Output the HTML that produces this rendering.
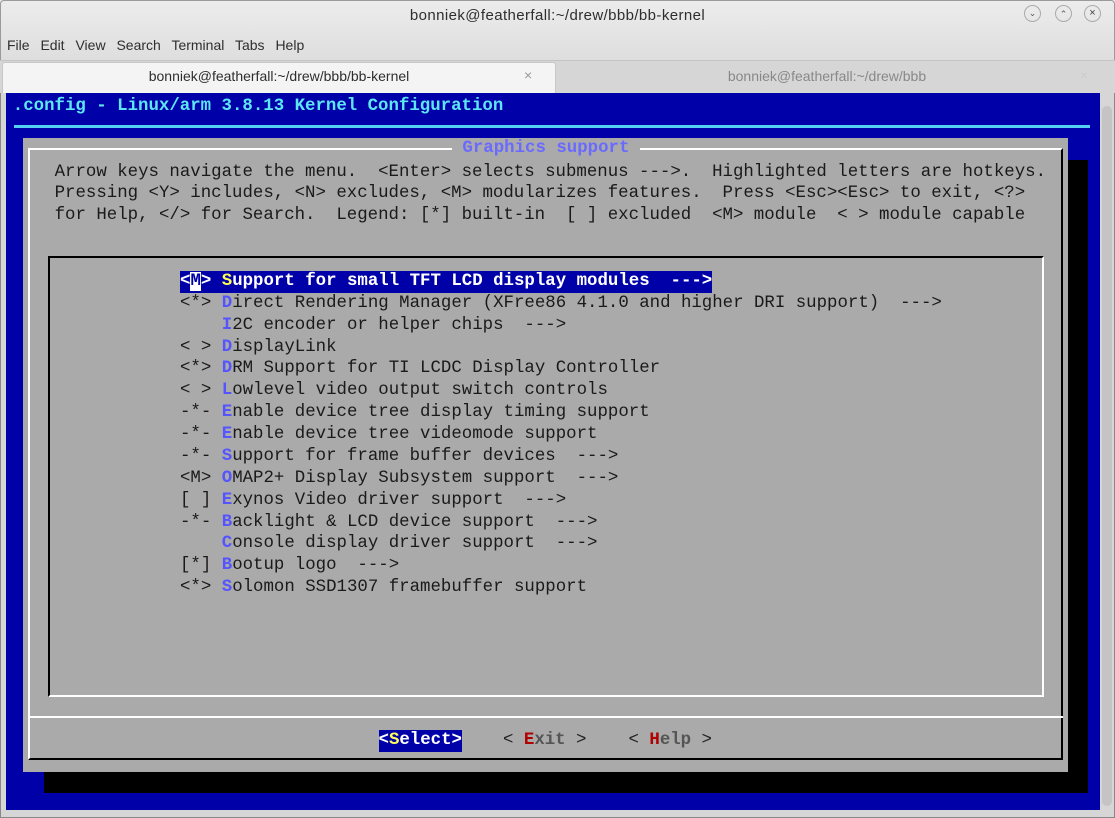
<!DOCTYPE html>
<html><head><style>
*{margin:0;padding:0;box-sizing:border-box}
body{width:1115px;height:818px;overflow:hidden;background:#e8e8e8;font-family:"Liberation Sans",sans-serif;position:relative}
.abs{position:absolute}
.t{position:absolute;font-family:"Liberation Mono",monospace;font-size:17.4px;line-height:21.86px;height:21.86px;white-space:pre;color:#1a1a1a;margin-top:2px}
.h{color:#5555ff;font-weight:bold}
.r{color:#b00000;font-weight:bold}
</style></head><body>
<!-- title bar -->
<div class="abs" style="left:0;top:0;width:1115px;height:60px;background:linear-gradient(#ececec,#dedede);border:1px solid #9a9a9a;border-bottom:none;border-radius:4px 4px 0 0"></div>
<div class="abs" style="left:0;top:7px;width:1115px;text-align:center;font-size:15px;letter-spacing:0.4px;color:#2e2e2e">bonniek@featherfall:~/drew/bbb/bb-kernel</div>
<div class="abs" style="left:1024px;top:5px;width:17px;height:17px;border:1px solid #aaa;border-radius:50%;font-size:9px;text-align:center;line-height:15px;color:#555">&#8964;</div>
<div class="abs" style="left:1055px;top:5px;width:17px;height:17px;border:1px solid #aaa;border-radius:50%;font-size:9px;text-align:center;line-height:17px;color:#555">&#8963;</div>
<div class="abs" style="left:1084px;top:5px;width:17px;height:17px;border:1px solid #aaa;border-radius:50%;font-size:11px;text-align:center;line-height:15px;color:#444">&#215;</div>
<div class="abs" style="left:7px;top:37px;font-size:14px;color:#2e2e2e;word-spacing:7px">File Edit View Search Terminal Tabs Help</div>
<!-- tabs -->
<div class="abs" style="left:0;top:60px;width:1115px;height:33px;background:#d6d6d6;border-top:1px solid #c4c4c4"></div>
<div class="abs" style="left:2px;top:62px;width:554px;height:31px;background:#f4f4f4;border:1px solid #c8c8c8;border-bottom:none;border-radius:3px 3px 0 0"></div>
<div class="abs" style="left:2px;top:68px;width:554px;text-align:center;font-size:14px;color:#2e2e2e">bonniek@featherfall:~/drew/bbb/bb-kernel</div>
<div class="abs" style="left:524px;top:67px;font-size:14px;color:#999">×</div>
<div class="abs" style="left:557px;top:68px;width:540px;text-align:center;font-size:14px;color:#888">bonniek@featherfall:~/drew/bbb</div>
<div class="abs" style="left:1080px;top:67px;font-size:14px;color:#ccc">×</div>
<!-- terminal -->
<div class="abs" style="left:0;top:93px;width:1115px;height:725px;background:#0000a8;border-left:6px solid #d6d6d6;border-right:15px solid #d6d6d6;border-bottom:8px solid #d6d6d6"></div>
<div class="abs" style="left:1102px;top:106px;width:10px;height:700px;border-radius:5px;background:#c4c4c4"></div>
<div class="abs" style="left:0;top:93px;width:1px;height:725px;background:#888"></div>
<div class="abs" style="left:1114px;top:93px;width:1px;height:725px;background:#888"></div>
<div class="abs" style="left:0;top:817px;width:1115px;height:1px;background:#888"></div>
<div class="abs" style="left:14px;top:125px;width:1076px;height:3px;background:#55d0f0"></div>
<div class="t" style="left:12.8px;top:94px;color:#5fe6f6;font-weight:bold">.config - Linux/arm 3.8.13 Kernel Configuration</div>
<!-- shadow -->
<div class="abs" style="left:44px;top:772px;width:1044px;height:21px;background:#000"></div>
<div class="abs" style="left:1068px;top:160px;width:20px;height:633px;background:#000"></div>
<!-- dialog -->
<div class="abs" style="left:23px;top:138px;width:1045px;height:634px;background:#aaa"></div>
<div class="abs" style="left:28px;top:148px;width:1035px;height:612px;border-top:2px solid #fff;border-left:2px solid #fff;border-right:2px solid #000;border-bottom:2px solid #000"></div>
<div class="abs" style="left:28px;top:716px;width:1035px;height:2px;background:#fff"></div>
<div class="t" style="left:452px;top:136px;background:#aaa;color:#6a6aff;font-weight:bold"> Graphics support </div>
<div class="t" style="left:54.6px;top:159.6px">Arrow keys navigate the menu.  &lt;Enter&gt; selects submenus ---&gt;.  Highlighted letters are hotkeys.</div>
<div class="t" style="left:54.6px;top:181.4px">Pressing &lt;Y&gt; includes, &lt;N&gt; excludes, &lt;M&gt; modularizes features.  Press &lt;Esc&gt;&lt;Esc&gt; to exit, &lt;?&gt;</div>
<div class="t" style="left:54.6px;top:203.3px">for Help, &lt;/&gt; for Search.  Legend: [*] built-in  [ ] excluded  &lt;M&gt; module  &lt; &gt; module capable</div>
<!-- menu box -->
<div class="abs" style="left:48px;top:256px;width:996px;height:441px;border-top:2px solid #000;border-left:2px solid #000;border-right:2px solid #fff;border-bottom:2px solid #fff"></div>
<div class="t" style="left:180px;top:269px;background:#0000a8;color:#fff;font-weight:bold">&lt;<span style="background:#fff;color:#0000a8">M</span>&gt; <span style="color:#ffff55">S</span>upport for small TFT LCD display modules  ---&gt;</div>
<div class="t" style="left:180px;top:290.9px">&lt;*&gt; <span class="h">D</span>irect Rendering Manager (XFree86 4.1.0 and higher DRI support)  ---&gt;</div>
<div class="t" style="left:180px;top:312.7px">    <span class="h">I</span>2C encoder or helper chips  ---&gt;</div>
<div class="t" style="left:180px;top:334.6px">&lt; &gt; <span class="h">D</span>isplayLink</div>
<div class="t" style="left:180px;top:356.4px">&lt;*&gt; <span class="h">D</span>RM Support for TI LCDC Display Controller</div>
<div class="t" style="left:180px;top:378.3px">&lt; &gt; <span class="h">L</span>owlevel video output switch controls</div>
<div class="t" style="left:180px;top:400.2px">-*- <span class="h">E</span>nable device tree display timing support</div>
<div class="t" style="left:180px;top:422px">-*- <span class="h">E</span>nable device tree videomode support</div>
<div class="t" style="left:180px;top:443.9px">-*- <span class="h">S</span>upport for frame buffer devices  ---&gt;</div>
<div class="t" style="left:180px;top:465.7px">&lt;M&gt; <span class="h">O</span>MAP2+ Display Subsystem support  ---&gt;</div>
<div class="t" style="left:180px;top:487.6px">[ ] <span class="h">E</span>xynos Video driver support  ---&gt;</div>
<div class="t" style="left:180px;top:509.5px">-*- <span class="h">B</span>acklight &amp; LCD device support  ---&gt;</div>
<div class="t" style="left:180px;top:531.3px">    <span class="h">C</span>onsole display driver support  ---&gt;</div>
<div class="t" style="left:180px;top:553.2px">[*] <span class="h">B</span>ootup logo  ---&gt;</div>
<div class="t" style="left:180px;top:575px">&lt;*&gt; <span class="h">S</span>olomon SSD1307 framebuffer support</div>
<!-- buttons -->
<div class="t" style="left:378.5px;top:728px;background:#0000a8;color:#fff;font-weight:bold">&lt;<span style="color:#ffff55">S</span>elect&gt;</div>
<div class="t" style="left:503px;top:728px;color:#222">&lt; <span class="r">E</span><span style="color:#555;font-weight:bold">xit</span> &gt;</div>
<div class="t" style="left:628.5px;top:728px;color:#222">&lt; <span class="r">H</span><span style="color:#555;font-weight:bold">elp</span> &gt;</div>
</body></html>
